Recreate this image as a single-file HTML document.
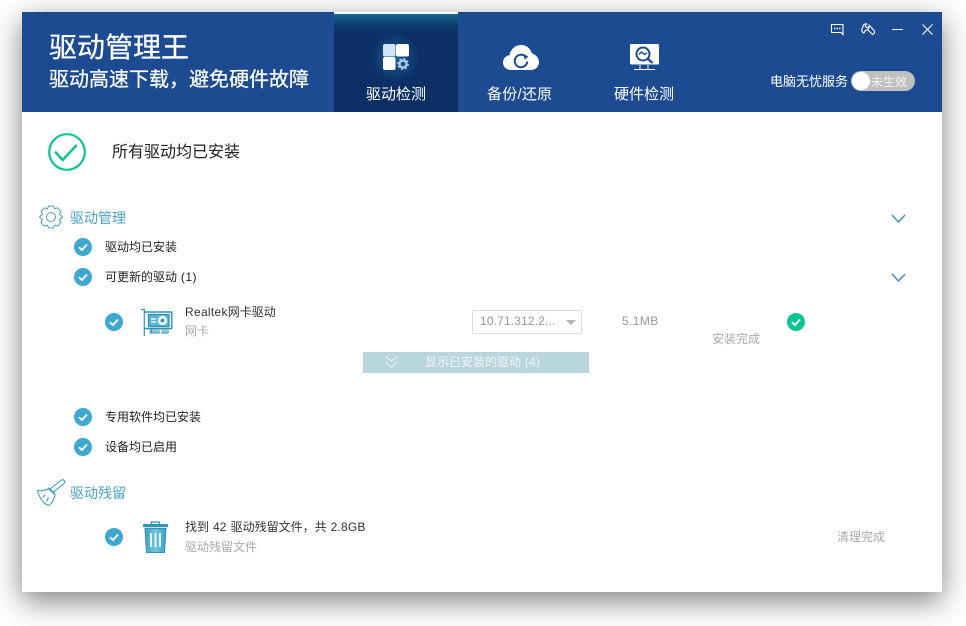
<!DOCTYPE html>
<html lang="zh-CN">
<head>
<meta charset="utf-8">
<title>驱动管理王</title>
<style>
html,body{margin:0;padding:0;width:966px;height:626px;overflow:hidden;background:#fff;}
body{position:relative;font-family:"Liberation Sans","Noto Sans CJK SC",sans-serif;}
#win{position:absolute;left:22px;top:12px;width:920px;height:580px;background:#fff;box-shadow:0 9px 28px rgba(0,0,0,.5);}
#head{position:absolute;left:22px;top:12px;width:920px;height:100px;background:#1d4b92;}
.t{position:absolute;white-space:nowrap;line-height:1;}
svg{position:absolute;overflow:visible;}
#tab{position:absolute;left:334px;top:12px;width:124px;height:100px;background:linear-gradient(#1d7f9f 0,#155d88 4px,#0f3f72 12px,#0c3066 22px,#0c3066 100%);}
#tabline{position:absolute;left:334px;top:12px;width:124px;height:2px;background:#fff;}
#glow{position:absolute;left:370px;top:32px;width:50px;height:50px;background:radial-gradient(circle,rgba(40,140,190,.5),rgba(40,140,190,0) 70%);}
#toggle{position:absolute;left:851px;top:71px;width:64px;height:20px;border-radius:10px;background:#c0c0c0;}
#knob{position:absolute;left:852px;top:72px;width:18px;height:18px;border-radius:50%;background:#fff;}
#select{position:absolute;left:472px;top:310px;width:108px;height:22px;border:1px solid #dcdcdc;border-radius:2px;background:#fff;}
#showbar{position:absolute;left:363px;top:352px;width:226px;height:21px;background:#b9d5de;}
</style>
</head>
<body>
<div id="win"></div>
<div id="head"></div>
<div id="tab"></div>
<div id="tabline"></div>
<div id="glow"></div>

<div class="t" style="left:49px;top:34px;font-size:28px;color:#fff;-webkit-text-stroke:.25px #fff;">驱动管理王</div>
<div class="t" style="left:49px;top:70px;font-size:20px;color:#fff;-webkit-text-stroke:.25px #fff;">驱动高速下载，避免硬件故障</div>

<!-- tab icon 1 -->
<svg style="left:383px;top:44px" width="27" height="27" viewBox="0 0 27 27">
  <rect x="0" y="0" width="12.500" height="12.500" rx="2" fill="#d2e6fb"/>
  <rect x="13" y="0" width="13" height="12.500" rx="2" fill="#fff"/>
  <rect x="0" y="13" width="12.500" height="13" rx="2" fill="#fff"/>
  <circle cx="20" cy="20" r="3.500" fill="none" stroke="#a9c8ea" stroke-width="2.400"/>
  <circle cx="20" cy="20" r="5.200" fill="none" stroke="#a9c8ea" stroke-width="1.500" stroke-dasharray="2 2.100"/>
</svg>
<div class="t" style="left:366px;top:87px;font-size:15px;color:#fff;">驱动检测</div>

<!-- tab icon 2 -->
<svg style="left:503px;top:45px" width="36" height="25" viewBox="0 0 36 25">
  <path d="M8 25C3 25 0 21.500 0 17.500C0 13.500 3 10.500 6.500 10.200C7.500 4.500 12 0 18 0C23.500 0 27.500 3.500 29 8.500C33 9.500 36 13 36 17C36 21.500 32.500 25 28 25Z" fill="#fff"/>
  <path d="M24.300 16.500A6.300 6.300 0 1 1 21.500 10.700" fill="none" stroke="#1d4b92" stroke-width="2"/>
  <path d="M20.500 9L25.500 11.500L21.500 14.500Z" fill="#1d4b92"/>
</svg>
<div class="t" style="left:487px;top:87px;font-size:15px;letter-spacing:.25px;color:#fff;">备份/还原</div>

<!-- tab icon 3 -->
<svg style="left:630px;top:44px" width="29" height="26" viewBox="0 0 29 26">
  <rect x="0" y="0" width="29" height="20.500" rx="1.500" fill="#fff"/>
  <circle cx="13" cy="10" r="6.500" fill="none" stroke="#1d4b92" stroke-width="2"/>
  <path d="M17.500 14.500L22.500 19" stroke="#1d4b92" stroke-width="2.200" fill="none"/>
  <path d="M9 10.500L11.500 8L14.500 10.500L17 9" stroke="#1d4b92" stroke-width="1.400" fill="none"/>
  <path d="M10 21V25M18 21V25M4 25.500H25" stroke="#fff" stroke-width="1" fill="none"/>
</svg>
<div class="t" style="left:614px;top:87px;font-size:15px;color:#fff;">硬件检测</div>

<!-- window controls -->
<svg style="left:831px;top:24px" width="13" height="11" viewBox="0 0 13 11" fill="none" stroke="#fff" stroke-width="1.100">
  <path d="M.5 .5H12V10.500L10 8.500H.5Z"/>
  <path d="M3 4.500H4.400M5.500 4.500H6.900M8 4.500H9.400" stroke-width="1.600"/>
</svg>
<svg style="left:861px;top:23px" width="14" height="13" viewBox="0 0 14 13" fill="none" stroke="#fff" stroke-width="1.100" stroke-linejoin="round">
  <path d="M5.500 .8C3.500 .8 2 2 1.800 4.300L.7 6.500C.7 8 1.300 9.300 3 10L4.600 7.200C6.500 7.300 8 6.200 8 3.500L6 4.800L4.300 3.300Z"/>
  <path d="M7.500 1.500L13.500 8V10L11.500 11.500L7 7"/>
</svg>
<svg style="left:892px;top:29px" width="11" height="2" viewBox="0 0 11 2"><path d="M0 .5H11" stroke="#fff" stroke-width="1"/></svg>
<svg style="left:922px;top:24px" width="11" height="11" viewBox="0 0 11 11"><path d="M.5 .5L10.500 10.500M10.500 .5L.5 10.500" stroke="#fff" stroke-width="1.100" fill="none"/></svg>

<div class="t" style="left:770px;top:75px;font-size:13px;color:#fff;">电脑无忧服务</div>
<div id="toggle"></div>
<div id="knob"></div>
<div class="t" style="left:871px;top:76px;font-size:12px;color:#f4f4f4;">未生效</div>

<!-- status -->
<svg style="left:48px;top:133px" width="38" height="38" viewBox="0 0 38 38" fill="none" stroke="#0cc594">
  <circle cx="19" cy="19" r="17.800" stroke-width="2.200"/>
  <path d="M7 18.700L14.700 27L28.700 12" stroke-width="2.500"/>
</svg>
<div class="t" style="left:112px;top:145px;font-size:16px;color:#222;">所有驱动均已安装</div>

<!-- section 1 -->
<svg style="left:39px;top:205px" width="24" height="24" viewBox="0 0 24 24" fill="none" stroke="#4a9dc0" stroke-width="1">
  <circle cx="12" cy="12" r="4.500"/>
  <path d="M9.500 1L14.500 1L15.500 3.800L18.500 2.800L22 6.700L20.500 9.200L23.500 12L20.500 14.800L22 17.500L18.500 21.200L15.500 20.200L14.500 23H9.500L8.500 20.200L5.500 21.200L2 17.500L3.500 14.800L.5 12L3.500 9.200L2 6.700L5.500 2.800L8.500 3.800Z" stroke-linejoin="round"/>
</svg>
<div class="t" style="left:70px;top:211px;font-size:14px;color:#46a3c6;">驱动管理</div>
<svg style="left:891px;top:214px" width="15" height="9" viewBox="0 0 15 9"><path d="M1 1L7.500 8L14 1" fill="none" stroke="#3f8fd8" stroke-width="1.500"/></svg>

<svg style="left:74px;top:238px" width="18" height="18" viewBox="0 0 18 18"><circle cx="9" cy="9" r="9" fill="#3fa8d0"/><path d="M5 9.300L8 12L13 6.500" fill="none" stroke="#fff" stroke-width="1.800"/></svg>
<div class="t" style="left:105px;top:241px;font-size:12px;color:#222;">驱动均已安装</div>

<svg style="left:74px;top:268px" width="18" height="18" viewBox="0 0 18 18"><circle cx="9" cy="9" r="9" fill="#3fa8d0"/><path d="M5 9.300L8 12L13 6.500" fill="none" stroke="#fff" stroke-width="1.800"/></svg>
<div class="t" style="left:105px;top:271px;font-size:12px;color:#222;">可更新的驱动<span style="letter-spacing:.5px"> (1)</span></div>
<svg style="left:891px;top:273px" width="15" height="9" viewBox="0 0 15 9"><path d="M1 1L7.500 8L14 1" fill="none" stroke="#3f8fd8" stroke-width="1.500"/></svg>

<!-- driver row -->
<svg style="left:105px;top:313px" width="18" height="18" viewBox="0 0 18 18"><circle cx="9" cy="9" r="9" fill="#3fa8d0"/><path d="M5 9.300L8 12L13 6.500" fill="none" stroke="#fff" stroke-width="1.800"/></svg>
<svg style="left:141px;top:309px" width="31" height="27" viewBox="0 0 31 27">
  <path d="M0 .5H3.300V27" fill="none" stroke="#2f93b5" stroke-width="1.200"/>
  <path d="M3.300 3H30.800V19.500H3.300" fill="none" stroke="#2f93b5" stroke-width="1.400"/>
  <rect x="7.500" y="5.500" width="20.500" height="12" fill="#5ab8d6" stroke="#2f93b5" stroke-width="1.300"/>
  <path d="M10 10H15M10 13H15" stroke="#fff" stroke-width="1.300"/>
  <circle cx="21.500" cy="11.500" r="4.600" fill="#fff"/>
  <circle cx="21.500" cy="11.500" r="2" fill="#2f93b5"/>
  <path d="M9 20V23.500M10.500 20V23.500M12 20V23.500M14 20V23.500M16 20V23.500M18 20V23.500M21 20V23.500M23 20V23.500M25 20V23.500M27 20V23.500" stroke="#2f93b5" stroke-width="1"/>
  <path d="M8.500 24H18.500M20.500 24H27.500" stroke="#2f93b5" stroke-width="1"/>
</svg>
<div class="t" style="left:185px;top:306px;font-size:12px;color:#333;"><span style="letter-spacing:.3px">Realtek</span>网卡驱动</div>
<div class="t" style="left:185px;top:325px;font-size:12px;color:#aaa;">网卡</div>
<div id="select"></div>
<div class="t" style="left:480px;top:315px;font-size:12px;letter-spacing:.15px;color:#999;">10.71.312.2...</div>
<svg style="left:566px;top:320px" width="10" height="5" viewBox="0 0 10 5"><path d="M0 0H10L5 5Z" fill="#b5b5b5"/></svg>
<div class="t" style="left:622px;top:315px;font-size:12px;letter-spacing:.4px;color:#999;">5.1MB</div>
<div class="t" style="left:712px;top:333px;font-size:12px;color:#aaa;">安装完成</div>
<svg style="left:787px;top:313px" width="18" height="18" viewBox="0 0 18 18"><circle cx="9" cy="9" r="9" fill="#0cc594"/><path d="M5 9.300L8 12L13 6.500" fill="none" stroke="#fff" stroke-width="2"/></svg>

<div id="showbar"></div>
<svg style="left:385px;top:356px" width="13" height="13" viewBox="0 0 13 13"><path d="M.5 .5L6.500 5L12.500 .5M.5 6L6.500 11L12.500 6" fill="none" stroke="#eef6f8" stroke-width="1"/></svg>
<div class="t" style="left:425px;top:356px;font-size:12px;color:#f1f7f9;">显示已安装的驱动<span style="letter-spacing:.3px"> (4)</span></div>

<svg style="left:74px;top:408px" width="18" height="18" viewBox="0 0 18 18"><circle cx="9" cy="9" r="9" fill="#3fa8d0"/><path d="M5 9.300L8 12L13 6.500" fill="none" stroke="#fff" stroke-width="1.800"/></svg>
<div class="t" style="left:105px;top:411px;font-size:12px;color:#222;">专用软件均已安装</div>
<svg style="left:74px;top:438px" width="18" height="18" viewBox="0 0 18 18"><circle cx="9" cy="9" r="9" fill="#3fa8d0"/><path d="M5 9.300L8 12L13 6.500" fill="none" stroke="#fff" stroke-width="1.800"/></svg>
<div class="t" style="left:105px;top:441px;font-size:12px;color:#222;">设备均已启用</div>

<!-- section 2 -->
<svg style="left:37px;top:479px" width="28" height="27" viewBox="0 0 28 27" fill="none" stroke="#3f9dc2" stroke-width="1.100" stroke-linejoin="round">
  <path d="M13 10L24.500 1C26 0 28.500 2.500 27.500 4L16.300 13.300"/>
  <path d="M11.300 8.500L13 10L16.300 13.300L18 15.500"/>
  <path d="M.5 11.500C4 12 8 11.500 11.300 9.800L18 15.700C17.500 20 15 24.500 11.500 26.500C6.500 24.500 2 18.500 .5 11.500Z"/>
  <path d="M6 18.500L8 15.500M9.500 22.500L11.500 18.500"/>
</svg>
<div class="t" style="left:70px;top:486px;font-size:14px;color:#46a3c6;">驱动残留</div>

<svg style="left:105px;top:528px" width="18" height="18" viewBox="0 0 18 18"><circle cx="9" cy="9" r="9" fill="#3fa8d0"/><path d="M5 9.300L8 12L13 6.500" fill="none" stroke="#fff" stroke-width="1.800"/></svg>
<svg style="left:143px;top:521px" width="25" height="32" viewBox="0 0 25 32">
  <defs><linearGradient id="tg" x1="0" y1="0" x2="1" y2="0"><stop offset="0" stop-color="#3f9fc2"/><stop offset=".5" stop-color="#74c4dc"/><stop offset="1" stop-color="#3f9fc2"/></linearGradient></defs>
  <path d="M8.500 3V1H16.500V3" fill="none" stroke="#2f93b5" stroke-width="1.300"/>
  <rect x="0" y="3" width="25" height="3.200" rx="1" fill="#2f93b5"/>
  <path d="M2 7.500H23L21.500 31.500H3.500Z" fill="url(#tg)" stroke="#2f93b5" stroke-width="1"/>
  <path d="M8 12V26M12.500 12V26M17 12V26" stroke="#f2fafc" stroke-width="1.800"/>
</svg>
<div class="t" style="left:185px;top:521px;font-size:12px;word-spacing:.6px;color:#333;">找到 <span style="letter-spacing:.2px">42</span> 驱动残留文件，共 <span style="letter-spacing:.2px">2.8GB</span></div>
<div class="t" style="left:185px;top:541px;font-size:12px;color:#aaa;">驱动残留文件</div>
<div class="t" style="left:837px;top:531px;font-size:12px;color:#aaa;">清理完成</div>
</body>
</html>
